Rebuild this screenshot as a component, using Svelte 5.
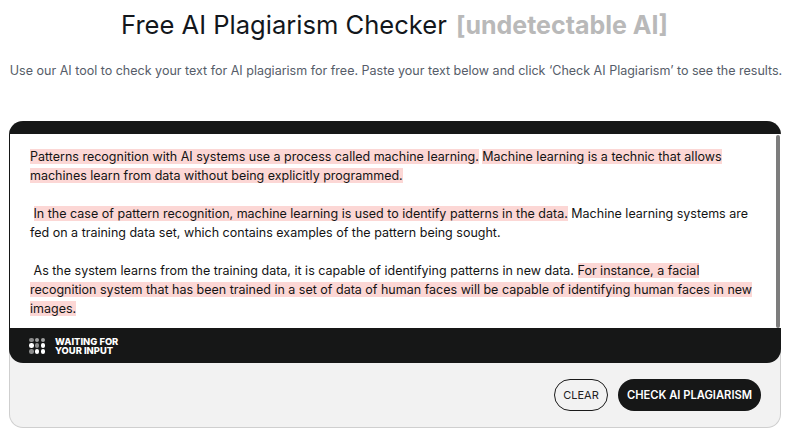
<script>
  const dots = [0.5,0.6,0.6, 1,0.5,1, 0.5,1,1];
</script>

<main class="page">
  <header class="head">
    <h1>Free AI Plagiarism Checker <span class="tag">[undetectable AI]</span></h1>
    <p class="sub">Use our AI tool to check your text for AI plagiarism for free. Paste your text below and click ‘Check AI Plagiarism’ to see the results.</p>
  </header>

  <section class="card">
    <div class="panel">
      <div class="topbar"></div>
      <div class="editor">
        <div class="content">
          <p><mark>Patterns recognition with AI systems use a process called machine learning.</mark> <mark>Machine learning is a technic that allows<br />machines learn from data without being explicitly programmed.</mark></p>
          <p>&nbsp;<mark>In the case of pattern recognition, machine learning is used to identify patterns in the data.</mark> Machine learning systems are<br />fed on a training data set, which contains examples of the pattern being sought.</p>
          <p>&nbsp;As the system learns from the training data, it is capable of identifying patterns in new data. <mark>For instance, a facial<br />recognition system that has been trained in a set of data of human faces will be capable of identifying human faces in new<br />images.</mark></p>
        </div>
        <div class="scrollbar"></div>
      </div>
      <div class="status">
        <div class="dots">
          {#each dots as o}
            <i style="opacity:{o}"></i>
          {/each}
        </div>
        <div class="waiting">WAITING FOR<br />YOUR INPUT</div>
      </div>
    </div>
    <div class="actions">
      <button class="clear">CLEAR</button>
      <button class="check">CHECK AI PLAGIARISM</button>
    </div>
  </section>
</main>

<style>
  :global(body) { margin: 0; background: #fff; font-family: "Inter", "Liberation Sans", sans-serif; }
  .page { width: 792px; height: 440px; overflow: hidden; box-sizing: border-box; }
  .head { text-align: center; }
  h1 { margin: 0; padding: 9px 3px 0 0; font-size: 25.55px; line-height: 32px; font-weight: 400; color: #13171c; white-space: nowrap; }
  .tag { margin-left: 2px; font-size: 25px; font-weight: 700; color: #b9b9b9; }
  .sub { margin: 0; padding-top: 21px; font-size: 12.53px; line-height: 18px; color: #565d69; white-space: nowrap; }
  .card { margin: 41px 11px 0 9px; height: 307px; box-sizing: border-box; background: #f2f2f2; border: 1px solid #cfcfcf; border-top: 0; border-radius: 14px; display: flex; flex-direction: column; }
  .panel { margin: 0 -1px; border-radius: 14px; overflow: hidden; background: #161717; }
  .topbar { height: 13px; }
  .editor { height: 194px; margin-left: 1px; background: #fff; position: relative; box-sizing: border-box; padding: 13px 0 0 20px; }
  .content { font-size: 12.5px; line-height: 19px; color: #141414; white-space: nowrap; }
  .content p { margin: 0 0 19px; }
  mark { background: #fcd7d5; color: inherit; }
  .scrollbar { position: absolute; right: 1px; top: 1px; bottom: 0; width: 4px; background: #7d7d7d; border-radius: 2px; }
  .status { height: 35px; display: flex; align-items: center; padding-left: 20px; gap: 10px; }
  .dots { display: grid; grid-template-columns: repeat(3, 4.5px); gap: 1.25px; }
  .dots i { width: 4.5px; height: 4.5px; border-radius: 50%; background: #fff; }
  .waiting { color: #fff; font-size: 9.4px; line-height: 9px; font-weight: 800; }
  .actions { flex: 1; display: flex; align-items: center; justify-content: flex-end; gap: 10px; padding-right: 19px; }
  button { font-family: inherit; border-radius: 16px; height: 32px; font-size: 11px; padding: 0; }
  .clear { width: 54px; background: transparent; border: 1px solid #1a1a1a; color: #222; }
  .check { width: 143px; background: #161717; border: 0; color: #fff; font-size: 11.2px; font-weight: 600; }
</style>
